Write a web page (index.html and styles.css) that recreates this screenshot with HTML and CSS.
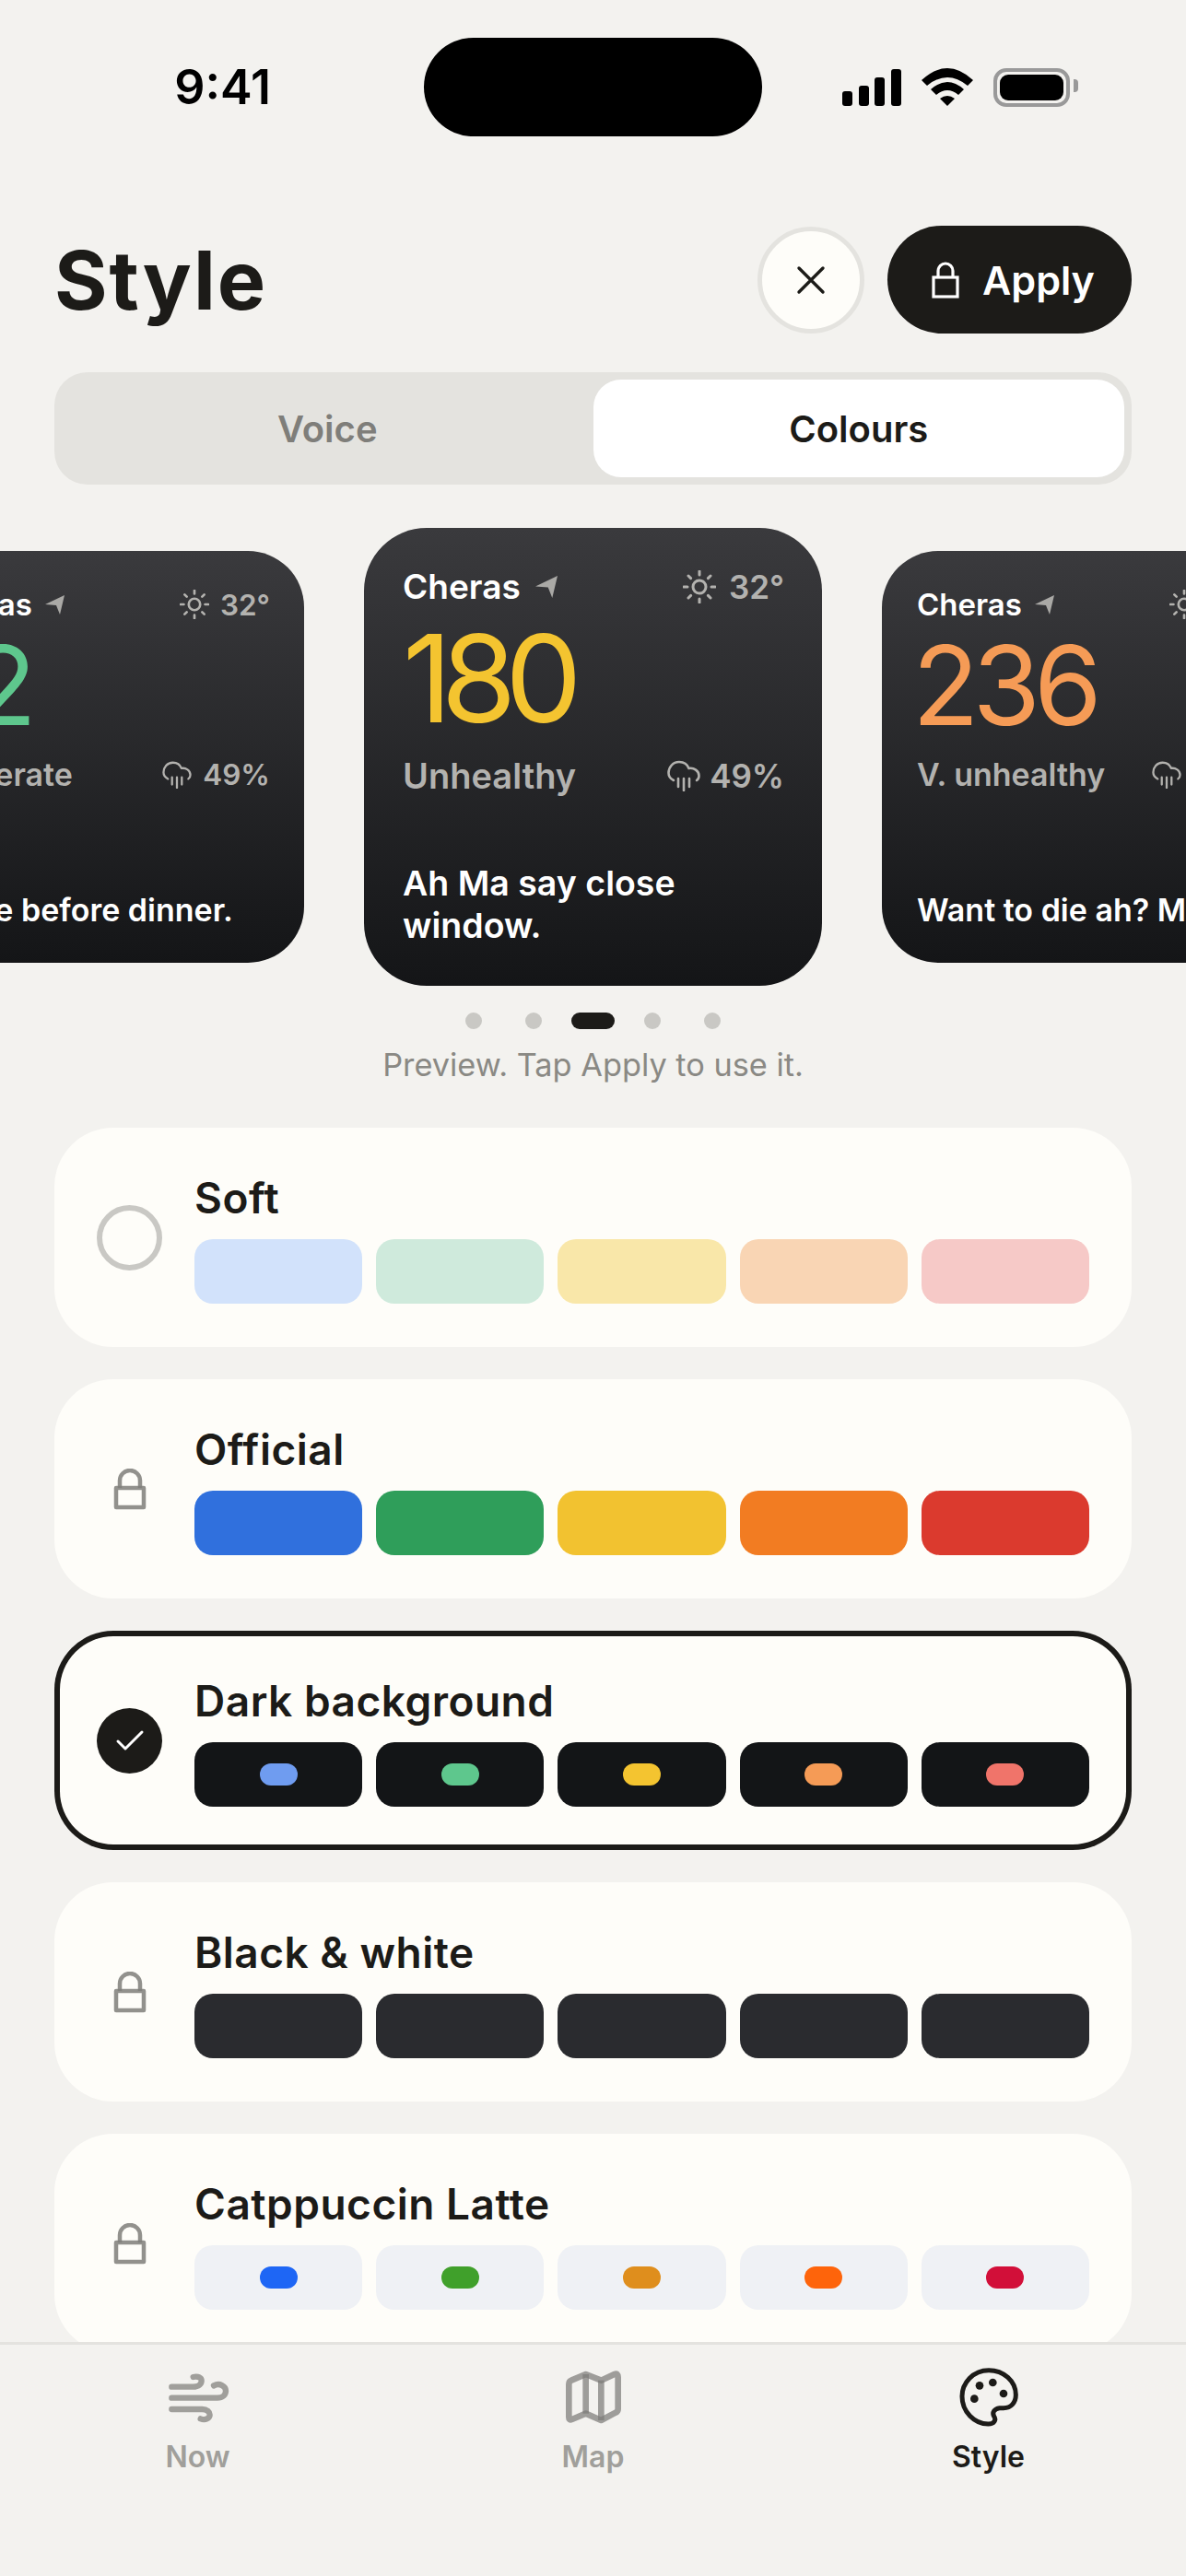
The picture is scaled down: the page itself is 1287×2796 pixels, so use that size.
FILE: index.html
```html
<!DOCTYPE html>
<html>
<head>
    <meta name="viewport" content="width=device-width, initial-scale=1.0">
    <link rel="stylesheet" href="styles.css">
</head>
<body>
    <div class="screen">
        <div class="status-bar">
            <div class="status-time">9:41</div>
            <div class="island"></div>
            <div class="status-icons">
                <svg class="icon-signal" width="64" height="40" viewBox="0 0 64 40">
                    <rect x="0" y="24" width="11" height="16" rx="3"/>
                    <rect x="18" y="18" width="11" height="22" rx="3"/>
                    <rect x="35" y="9" width="11" height="31" rx="3"/>
                    <rect x="53" y="0" width="11" height="40" rx="3"/>
                </svg>
                <svg class="icon-wifi" width="56" height="41" viewBox="0 0 56 41">
                    <path d="M0 13 Q28 -13 56 13 L50 19 Q28 1 6 19 Z"/>
                    <path d="M10 23 Q28 7 46 23 L40 29 Q28 19 16 29 Z"/>
                    <path d="M20 33 Q28 27 36 33 L28 41 Z"/>
                </svg>
                <div class="battery">
                    <div class="battery-level"></div>
                </div>
            </div>
        </div>

        <div class="content">
            <div class="header">
                <h1>Style</h1>
                <div class="header-actions">
                    <button class="btn-close">
                        <svg width="36" height="36" viewBox="0 0 36 36" fill="none" stroke="#1c1b18" stroke-width="3.4" stroke-linecap="round">
                            <path d="M5 5 L31 31 M31 5 L5 31"/>
                        </svg>
                    </button>
                    <button class="btn-apply">
                        <svg width="30" height="40" viewBox="0 0 30 40" fill="none" stroke="#fff" stroke-width="3.2">
                            <rect x="2" y="17" width="26" height="21"/>
                            <path d="M7 17 V10 a8 8 0 0 1 16 0 V17"/>
                        </svg>
                        Apply
                    </button>
                </div>
            </div>

            <div class="segment">
                <div class="segment-tab">Voice</div>
                <div class="segment-tab active">Colours</div>
            </div>

            <div class="carousel">
                <div class="aqi-card side">
                    <div class="card-row">
                        <div class="place">Cheras <svg class="arrow" viewBox="0 0 21 21"><path d="M21 0 L0 10 L12 11 L16 21 Z"/></svg></div>
                        <div class="meta"><svg class="sun" viewBox="0 0 36 36"><use href="#sun"/></svg>32°</div>
                    </div>
                    <div class="aqi-number green">72</div>
                    <div class="card-row">
                        <div class="aqi-label">Moderate</div>
                        <div class="meta"><svg class="rain" viewBox="0 0 36 34"><use href="#rain"/></svg>49%</div>
                    </div>
                    <div class="quote">Close before dinner.</div>
                </div>

                <div class="aqi-card">
                    <div class="card-row">
                        <div class="place">Cheras <svg class="arrow" viewBox="0 0 21 21"><path d="M21 0 L0 10 L12 11 L16 21 Z"/></svg></div>
                        <div class="meta"><svg class="sun" viewBox="0 0 36 36"><use href="#sun"/></svg>32°</div>
                    </div>
                    <div class="aqi-number yellow">180</div>
                    <div class="card-row">
                        <div class="aqi-label">Unhealthy</div>
                        <div class="meta"><svg class="rain" viewBox="0 0 36 34"><use href="#rain"/></svg>49%</div>
                    </div>
                    <div class="quote">Ah Ma say close window.</div>
                </div>

                <div class="aqi-card side">
                    <div class="card-row">
                        <div class="place">Cheras <svg class="arrow" viewBox="0 0 21 21"><path d="M21 0 L0 10 L12 11 L16 21 Z"/></svg></div>
                        <div class="meta"><svg class="sun" viewBox="0 0 36 36"><use href="#sun"/></svg>32°</div>
                    </div>
                    <div class="aqi-number orange">236</div>
                    <div class="card-row">
                        <div class="aqi-label">V. unhealthy</div>
                        <div class="meta"><svg class="rain" viewBox="0 0 36 34"><use href="#rain"/></svg>49%</div>
                    </div>
                    <div class="quote">Want to die ah? Mask on.</div>
                </div>
            </div>

            <div class="dots">
                <span class="dot"></span>
                <span class="dot"></span>
                <span class="dot current"></span>
                <span class="dot"></span>
                <span class="dot"></span>
            </div>
            <p class="caption">Preview. Tap Apply to use it.</p>

            <div class="theme-list">
                <div class="theme soft">
                    <div class="theme-mark"><div class="radio"></div></div>
                    <div class="theme-body">
                        <div class="theme-name">Soft</div>
                        <div class="swatches">
                            <div class="swatch"></div><div class="swatch"></div><div class="swatch"></div><div class="swatch"></div><div class="swatch"></div>
                        </div>
                    </div>
                </div>

                <div class="theme official">
                    <div class="theme-mark"><svg class="lock" viewBox="0 0 36 45"><use href="#lock"/></svg></div>
                    <div class="theme-body">
                        <div class="theme-name">Official</div>
                        <div class="swatches">
                            <div class="swatch"></div><div class="swatch"></div><div class="swatch"></div><div class="swatch"></div><div class="swatch"></div>
                        </div>
                    </div>
                </div>

                <div class="theme dark selected">
                    <div class="theme-mark">
                        <div class="radio checked">
                            <svg width="32" height="26" viewBox="0 0 32 26" fill="none" stroke="#fff" stroke-width="3" stroke-linecap="round" stroke-linejoin="round">
                                <path d="M3 14 L11 22 L29 4"/>
                            </svg>
                        </div>
                    </div>
                    <div class="theme-body">
                        <div class="theme-name">Dark background</div>
                        <div class="swatches">
                            <div class="swatch"><span></span></div><div class="swatch"><span></span></div><div class="swatch"><span></span></div><div class="swatch"><span></span></div><div class="swatch"><span></span></div>
                        </div>
                    </div>
                </div>

                <div class="theme mono">
                    <div class="theme-mark"><svg class="lock" viewBox="0 0 36 45"><use href="#lock"/></svg></div>
                    <div class="theme-body">
                        <div class="theme-name">Black &amp; white</div>
                        <div class="swatches">
                            <div class="swatch"></div><div class="swatch"></div><div class="swatch"></div><div class="swatch"></div><div class="swatch"></div>
                        </div>
                    </div>
                </div>

                <div class="theme latte">
                    <div class="theme-mark"><svg class="lock" viewBox="0 0 36 45"><use href="#lock"/></svg></div>
                    <div class="theme-body">
                        <div class="theme-name">Catppuccin Latte</div>
                        <div class="swatches">
                            <div class="swatch"><span></span></div><div class="swatch"><span></span></div><div class="swatch"><span></span></div><div class="swatch"><span></span></div><div class="swatch"><span></span></div>
                        </div>
                    </div>
                </div>
            </div>
        </div>

        <div class="tab-bar">
            <div class="tab">
                <svg class="tab-icon" viewBox="81 45 222 222" fill="none" stroke="#a09f9b" stroke-width="19" stroke-linecap="round">
                    <path d="M106 122 H175 C195 122 203 112 203 102 C203 92 193 87 176 90"/>
                    <path d="M106 158 H255 C272 158 282 148 282 135 C282 120 262 108 243 118"/>
                    <path d="M106 195 H205 C222 195 230 205 230 213 C230 225 215 232 200 226"/>
                </svg>
                <span>Now</span>
            </div>
            <div class="tab">
                <svg class="tab-icon" viewBox="79 49 222 222" fill="none" stroke="#7d7c78" stroke-width="20" stroke-opacity=".72" stroke-linejoin="round">
                    <path d="M165 85 L215 105 L258 85 Q270 80 270 95 V198 Q270 206 262 210 L215 235 L165 213 L120 232 Q110 236 110 225 V118 Q110 108 118 105 Z"/>
                    <path d="M165 85 V213"/>
                    <path d="M215 105 V235"/>
                </svg>
                <span>Map</span>
            </div>
            <div class="tab active">
                <svg class="tab-icon" viewBox="76 47 222 222" fill="none" stroke="#1c1b18" stroke-width="15">
                    <path d="M187 70 C135 70 100 112 100 155 C100 205 140 245 185 245 C205 245 212 232 204 220 C197 208 205 195 222 193 L235 193 C260 193 275 175 275 150 C275 105 235 70 187 70 Z"/>
                    <g fill="#1c1b18" stroke="none">
                        <circle cx="157" cy="120" r="13"/>
                        <circle cx="200" cy="110" r="13"/>
                        <circle cx="235" cy="146" r="13"/>
                        <circle cx="140" cy="163" r="13"/>
                    </g>
                </svg>
                <span>Style</span>
            </div>
        </div>
    </div>

    <!-- shared icons -->
    <svg class="defs" width="0" height="0">
        <defs>
            <g id="sun" fill="none" stroke="currentColor" stroke-width="3" stroke-linecap="round">
                <circle cx="18" cy="18" r="7"/>
                <path d="M18 1 V5 M18 31 V35 M1 18 H5 M31 18 H35 M6 6 L8.6 8.6 M27.4 27.4 L30 30 M30 6 L27.4 8.6 M8.6 27.4 L6 30"/>
            </g>
            <g id="rain" fill="none" stroke="currentColor" stroke-width="2.6" stroke-linecap="round" stroke-linejoin="round">
                <path d="M7 22 C3 20 1.5 17 1.5 14 C1.5 8 6 2 13 2 C18 2 22 5 23.5 9 C29 8 34.5 11.5 34.5 17 C34.5 19 33.5 21 32 22"/>
                <path d="M12 20 V29 M18 20 V33 M24 20 V29"/>
            </g>
            <g id="lock" fill="none" stroke="#7f7e7a" stroke-width="4.5" stroke-linejoin="round" stroke-opacity=".85">
                <rect x="3" y="21" width="30" height="21"/>
                <path d="M7 21 V13 a11 11 0 0 1 22 0 V21"/>
            </g>
        </defs>
    </svg>
</body>
</html>
```

FILE: styles.css
```css
* {
    box-sizing: border-box;
}

body {
    font-family: Inter, "Noto Sans", sans-serif;
    background-color: #f3f2ef;
    color: #1c1b18;
    margin: 0;
    padding: 0;
}

.screen {
    width: 1287px;
    height: 2796px;
    display: flex;
    flex-direction: column;
    overflow: hidden;
}

.defs {
    position: absolute;
}

/* status bar */
.status-bar {
    flex: none;
    display: grid;
    grid-template-columns: 1fr 367px 1fr;
    align-items: center;
    margin-top: 41px;
    height: 107px;
}

.status-time {
    justify-self: end;
    padding-right: 166px;
    font-size: 52px;
    font-weight: 600;
    color: #000;
}

.island {
    height: 107px;
    background-color: #000;
    border-radius: 54px;
}

.status-icons {
    display: flex;
    align-items: center;
    gap: 22px;
    padding-left: 87px;
}

.battery {
    position: relative;
    width: 83px;
    height: 42px;
    border: 4px solid #999;
    border-radius: 14px;
    padding: 3px;
}

.battery::after {
    content: "";
    position: absolute;
    right: -13px;
    top: 8px;
    width: 5px;
    height: 14px;
    background-color: #999;
    border-radius: 0 4px 4px 0;
}

.battery-level {
    height: 100%;
    background-color: #000;
    border-radius: 9px;
}

.content {
    flex: 1;
    min-height: 0;
    overflow: hidden;
}

/* header */
.header {
    display: flex;
    justify-content: space-between;
    align-items: center;
    margin-top: 97px;
    padding: 0 59px;
    height: 117px;
}

h1 {
    margin: 0;
    font-size: 88px;
    font-weight: 700;
    letter-spacing: 2px;
}

.header-actions {
    display: flex;
    align-items: center;
    gap: 25px;
}

button {
    font-family: inherit;
    border: none;
    padding: 0;
}

.btn-close {
    display: flex;
    align-items: center;
    justify-content: center;
    width: 116px;
    height: 116px;
    border-radius: 50%;
    background-color: #fefdf9;
    border: 5px solid #e4e3df;
}

.btn-apply {
    display: flex;
    align-items: center;
    justify-content: center;
    gap: 25px;
    width: 265px;
    height: 117px;
    padding-left: 8px;
    border-radius: 59px;
    background-color: #1c1b18;
    color: #fff;
    font-size: 43px;
    font-weight: 600;
}

/* voice / colours */
.segment {
    display: flex;
    margin: 42px 59px 0;
    height: 122px;
    padding: 8px;
    background-color: #e4e3df;
    border-radius: 36px;
}

.segment-tab {
    flex: 1;
    display: flex;
    align-items: center;
    justify-content: center;
    font-size: 40px;
    font-weight: 600;
    color: #7f7e7a;
    border-radius: 30px;
}

.segment-tab.active {
    background-color: #fff;
    color: #1c1b18;
}

/* preview cards */
.carousel {
    display: flex;
    justify-content: center;
    align-items: center;
    gap: 65px;
    margin-top: 47px;
    height: 497px;
}

.aqi-card {
    flex: none;
    display: flex;
    flex-direction: column;
    width: 497px;
    height: 497px;
    padding: 41px 41px 42px 42px;
    border-radius: 68px;
    background: linear-gradient(180deg, #3a3a3d 0%, #141517 100%);
    color: #fff;
}

.card-row {
    display: flex;
    justify-content: space-between;
    align-items: center;
}

.place {
    display: flex;
    align-items: center;
    gap: 16px;
    font-size: 37px;
    font-weight: 600;
}

.arrow {
    width: 24px;
    height: 24px;
    fill: #aaa9a6;
}

.meta {
    display: flex;
    align-items: center;
    gap: 14px;
    font-size: 35px;
    font-weight: 600;
    color: #b3b2af;
}

.sun {
    width: 36px;
    height: 36px;
}

.rain {
    width: 36px;
    height: 34px;
    margin-right: -4px;
}

.aqi-number {
    font-size: 132px;
    line-height: 132px;
    font-weight: 380;
    letter-spacing: -8px;
    margin: 11px 0 17px;
}

.yellow { color: #f4c430; letter-spacing: -12px; }
.green { color: #5ec78d; }
.orange { color: #f59b56; margin-left: -5px; }

.aqi-label {
    font-size: 38px;
    font-weight: 600;
    color: #b3b2af;
}

.quote {
    margin-top: auto;
    font-size: 37.5px;
    line-height: 46px;
    font-weight: 600;
}

.aqi-card.side {
    width: 447px;
    height: 447px;
    padding: 38px 37px 37px 38px;
    border-radius: 61px;
}

.side .place { font-size: 33px; gap: 14px; }
.side .arrow { width: 21px; height: 21px; }
.side .meta { font-size: 31.5px; gap: 12px; }
.side .sun { width: 32px; height: 32px; }
.side .rain { width: 32px; height: 30px; margin-right: 0; }
.side .aqi-number {
    font-size: 119px;
    line-height: 119px;
    letter-spacing: -7px;
    margin-top: 9px;
    margin-bottom: 16px;
}
.side .green { letter-spacing: -21px; }
.side .aqi-label { font-size: 34px; }
.side .quote {
    font-size: 34px;
    line-height: 41px;
    white-space: nowrap;
}

/* pager */
.dots {
    display: flex;
    justify-content: center;
    align-items: center;
    gap: 32px;
    margin-top: 29px;
    height: 18px;
}

.dot {
    width: 18px;
    height: 18px;
    border-radius: 50%;
    background-color: #c9c8c4;
}

.dot:first-child {
    margin-right: 15px;
}

.dot:last-child {
    margin-left: 15px;
}

.dot.current {
    width: 47px;
    border-radius: 9px;
    background-color: #1c1b18;
}

.caption {
    margin: 17px 0 0;
    text-align: center;
    font-size: 34.3px;
    line-height: 44px;
    color: #8a8984;
}

/* theme list */
.theme-list {
    display: flex;
    flex-direction: column;
    gap: 35px;
    margin: 46px 59px 0;
}

.theme {
    flex: none;
    display: flex;
    align-items: center;
    height: 238px;
    padding: 0 46px;
    background-color: #fefdf9;
    border-radius: 64px;
}

.theme.selected {
    box-shadow: inset 0 0 0 6px #1c1b18;
}

.theme-mark {
    flex: none;
    display: flex;
    justify-content: center;
    align-items: center;
    width: 71px;
    margin-right: 35px;
}

.radio {
    display: flex;
    justify-content: center;
    align-items: center;
    width: 71px;
    height: 71px;
    border-radius: 50%;
    border: 6px solid #c9c8c4;
}

.radio.checked {
    border: none;
    background-color: #1c1b18;
}

.lock {
    width: 36px;
    height: 45px;
}

.theme-body {
    flex: 1;
}

.theme-name {
    font-size: 46px;
    line-height: 58px;
    font-weight: 600;
    letter-spacing: 0.5px;
    margin-bottom: 16px;
}

.swatches {
    display: flex;
    gap: 15px;
}

.swatch {
    flex: 1;
    display: flex;
    justify-content: center;
    align-items: center;
    height: 70px;
    border-radius: 20px;
}

.swatch span {
    width: 41px;
    height: 24px;
    border-radius: 12px;
}

.soft .swatch:nth-child(1) { background-color: #d2e2fb; }
.soft .swatch:nth-child(2) { background-color: #cfeadc; }
.soft .swatch:nth-child(3) { background-color: #f9e7a9; }
.soft .swatch:nth-child(4) { background-color: #f9d5b4; }
.soft .swatch:nth-child(5) { background-color: #f6c9c7; }

.official .swatch:nth-child(1) { background-color: #3070dd; }
.official .swatch:nth-child(2) { background-color: #2f9e5a; }
.official .swatch:nth-child(3) { background-color: #f2c230; }
.official .swatch:nth-child(4) { background-color: #f27c22; }
.official .swatch:nth-child(5) { background-color: #db3a2e; }

.dark .swatch { background-color: #131517; }
.dark .swatch:nth-child(1) span { background-color: #6f9cf0; }
.dark .swatch:nth-child(2) span { background-color: #5ec78d; }
.dark .swatch:nth-child(3) span { background-color: #f4c430; }
.dark .swatch:nth-child(4) span { background-color: #f59b56; }
.dark .swatch:nth-child(5) span { background-color: #f0746a; }

.mono .swatch { background-color: #2a2b2f; }

.latte .swatch { background-color: #eff1f5; }
.latte .swatch:nth-child(1) span { background-color: #1e66f5; }
.latte .swatch:nth-child(2) span { background-color: #40a02b; }
.latte .swatch:nth-child(3) span { background-color: #df8e1d; }
.latte .swatch:nth-child(4) span { background-color: #fe640b; }
.latte .swatch:nth-child(5) span { background-color: #d20f39; }

/* tab bar */
.tab-bar {
    flex: none;
    display: grid;
    grid-template-columns: repeat(3, 1fr);
    height: 254px;
    border-top: 3px solid #e4e3df;
    background-color: #f3f2ef;
    padding-top: 20px;
}

.tab {
    display: flex;
    flex-direction: column;
    align-items: center;
    font-size: 32px;
    font-weight: 600;
    color: #a09f9b;
}

.tab.active {
    color: #1c1b18;
}

.tab-icon {
    width: 74px;
    height: 74px;
    margin-bottom: 8px;
}
```
